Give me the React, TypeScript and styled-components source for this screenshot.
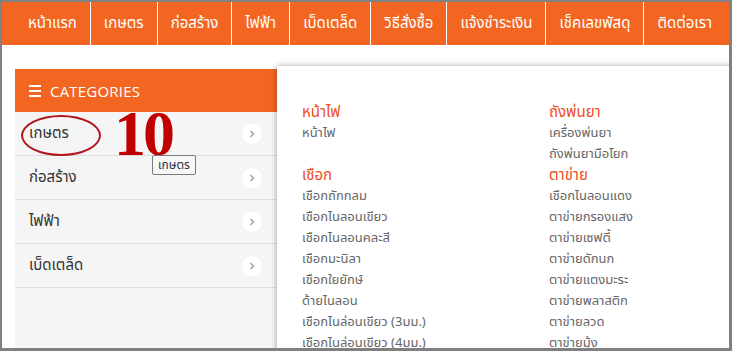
import React from "react";
import styled, { createGlobalStyle } from "styled-components";

const GlobalStyle = createGlobalStyle`
  html, body {
    margin: 0;
    padding: 0;
    background: #808080;
  }
  body {
    font-family: Tahoma, "Noto Sans Thai", "Noto Sans", "DejaVu Sans", sans-serif;
  }
`;

const Frame = styled.div`
  position: relative;
  box-sizing: border-box;
  width: 732px;
  height: 351px;
  border-style: solid;
  border-color: #808080;
  border-width: 2px 3px 3px 2px;
  background: #ffffff;
  overflow: hidden;
`;

const NavBar = styled.nav`
  display: flex;
  height: 43px;
  padding-left: 13px;
  background: #f36621;
`;

const NavItem = styled.a`
  display: flex;
  align-items: center;
  padding: 0 13px;
  color: #ffffff;
  font-size: 15px;
  white-space: nowrap;
  border-left: 1px solid #ffffff;
  &:first-child {
    border-left: none;
  }
`;

const Body = styled.div`
  display: flex;
  padding: 24px 0 0 13px;
  height: 281px;
`;

const Sidebar = styled.aside`
  position: relative;
  width: 262px;
  background: #f5f5f5;
  display: flex;
  flex-direction: column;
`;

const SideHeader = styled.div`
  display: flex;
  align-items: center;
  gap: 9px;
  height: 43px;
  padding-left: 14px;
  background: #f36621;
  color: #ffffff;
  font-family: "Open Sans", "Noto Sans", sans-serif;
  font-size: 15px;
  letter-spacing: 0.2px;
`;

const Burger = styled.span`
  display: flex;
  flex-direction: column;
  gap: 3px;
  width: 12px;
  & > i {
    display: block;
    height: 2px;
    background: #ffffff;
  }
`;

const CatRow = styled.div`
  display: flex;
  align-items: center;
  justify-content: space-between;
  height: 43px;
  padding: 0 15px 0 14px;
  border-bottom: 1px solid #dddddd;
  color: #333333;
  font-size: 15px;
`;

const Chevron = styled.span`
  display: flex;
  align-items: center;
  justify-content: center;
  width: 20px;
  height: 20px;
  border-radius: 50%;
  background: #ffffff;
`;

const Annotation = styled.div`
  position: absolute;
  left: 99px;
  top: 33px;
  font-family: "Liberation Serif", "DejaVu Serif", serif;
  font-weight: 700;
  font-size: 64px;
  line-height: 1;
  letter-spacing: -3px;
  color: #c00000;
`;

const Circle = styled.div`
  position: absolute;
  left: 6px;
  top: 46px;
  width: 76px;
  height: 37px;
  border: 2px solid #b0161c;
  border-radius: 50%;
`;

const Tooltip = styled.div`
  position: absolute;
  left: 137px;
  top: 86px;
  padding: 2px 5px;
  background: #f8f8f8;
  border: 1px solid #7a7a7a;
  border-radius: 2px;
  color: #333333;
  font-size: 12px;
  line-height: 14px;
`;

const MegaMenu = styled.div`
  position: absolute;
  left: 275px;
  top: 64px;
  width: 470px;
  height: 300px;
  box-sizing: border-box;
  padding: 36px 0 0 25px;
  background: #ffffff;
  box-shadow: 0 0 6px rgba(0, 0, 0, 0.35);
  display: grid;
  grid-template-columns: 247px 1fr;
  align-content: start;
`;

const Group = styled.div`
  display: flex;
  flex-direction: column;
`;

const GroupTitle = styled.div`
  color: #ee4c21;
  font-size: 15px;
  line-height: 21px;
`;

const GroupItem = styled.div`
  color: #666666;
  font-size: 13px;
  line-height: 21px;
`;

const navItems = [
  "หน้าแรก",
  "เกษตร",
  "ก่อสร้าง",
  "ไฟฟ้า",
  "เบ็ดเตล็ด",
  "วิธีสั่งซื้อ",
  "แจ้งชำระเงิน",
  "เช็คเลขพัสดุ",
  "ติดต่อเรา",
];

const categories = ["เกษตร", "ก่อสร้าง", "ไฟฟ้า", "เบ็ดเตล็ด"];

const groups = [
  { title: "หน้าไฟ", items: ["หน้าไฟ"] },
  { title: "ถังพ่นยา", items: ["เครื่องพ่นยา", "ถังพ่นยามือโยก"] },
  {
    title: "เชือก",
    items: [
      "เชือกถักกลม",
      "เชือกไนลอนเขียว",
      "เชือกไนลอนคละสี",
      "เชือกมะนิลา",
      "เชือกใยยักษ์",
      "ด้ายไนลอน",
      "เชือกไนล่อนเขียว (3มม.)",
      "เชือกไนล่อนเขียว (4มม.)",
    ],
  },
  {
    title: "ตาข่าย",
    items: [
      "เชือกไนลอนแดง",
      "ตาข่ายกรองแสง",
      "ตาข่ายเซฟตี้",
      "ตาข่ายดักนก",
      "ตาข่ายแตงมะระ",
      "ตาข่ายพลาสติก",
      "ตาข่ายลวด",
      "ตาข่ายมุ้ง",
    ],
  },
];

const ChevronIcon = () => (
  <svg width="8" height="10" viewBox="0 0 8 10">
    <path d="M2.5 2 L5.5 5 L2.5 8" fill="none" stroke="#999" strokeWidth="1.3" />
  </svg>
);

export default function App() {
  return (
    <>
      <GlobalStyle />
      <Frame>
        <NavBar>
          {navItems.map((item) => (
            <NavItem key={item}>{item}</NavItem>
          ))}
        </NavBar>
        <Body>
          <Sidebar>
            <SideHeader>
              <Burger>
                <i />
                <i />
                <i />
              </Burger>
              CATEGORIES
            </SideHeader>
            {categories.map((c) => (
              <CatRow key={c}>
                {c}
                <Chevron>
                  <ChevronIcon />
                </Chevron>
              </CatRow>
            ))}
            <Circle />
            <Annotation>10</Annotation>
            <Tooltip>เกษตร</Tooltip>
          </Sidebar>
        </Body>
        <MegaMenu>
          {groups.map((g) => (
            <Group key={g.title}>
              <GroupTitle>{g.title}</GroupTitle>
              {g.items.map((it) => (
                <GroupItem key={it}>{it}</GroupItem>
              ))}
            </Group>
          ))}
        </MegaMenu>
      </Frame>
    </>
  );
}
